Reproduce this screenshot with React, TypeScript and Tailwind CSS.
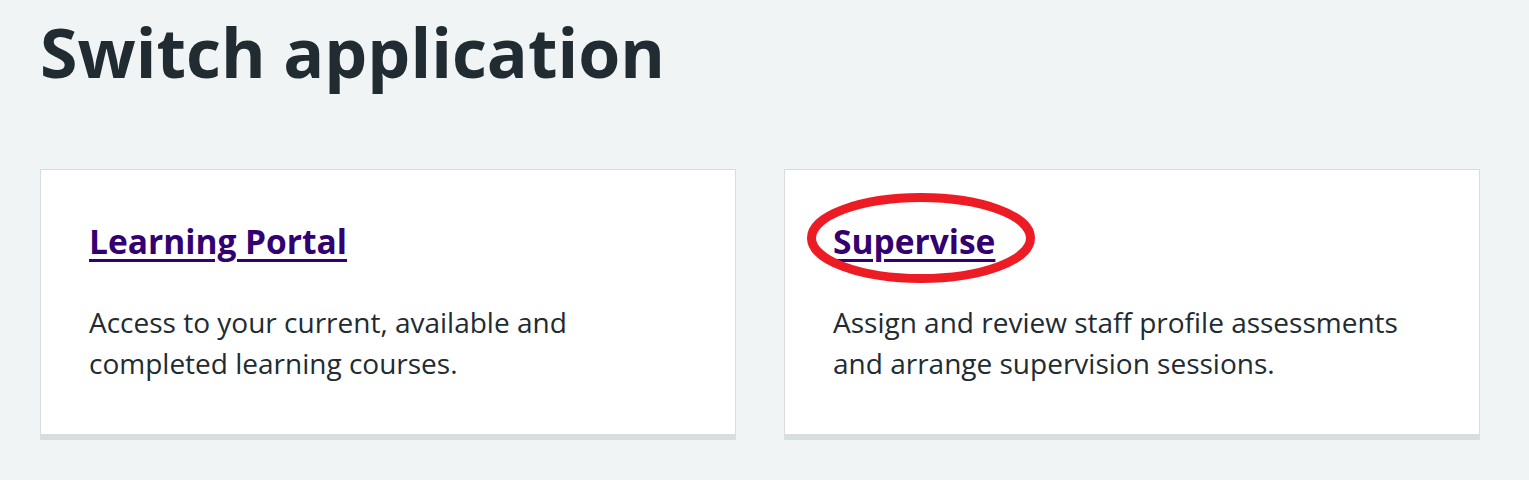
const apps = [
  {
    title: "Learning Portal",
    text: "Access to your current, available and completed learning courses.",
  },
  {
    title: "Supervise",
    text: "Assign and review staff profile assessments and arrange supervision sessions.",
    circled: true,
  },
];

export default function App() {
  return (
    <main className="min-h-[480px] bg-[#f0f4f5] px-10 pt-[4px] text-[#212b32] font-['Open_Sans',sans-serif]">
      <h1 className="text-[68px] font-bold leading-[1.4]">Switch application</h1>

      <div className="mt-[70px] grid w-[1440px] grid-cols-2 gap-12">
        {apps.map((app) => (
          <div
            key={app.title}
            className="h-[271px] border border-b-[6px] border-[#d8dde0] bg-white px-12 pt-[50px]"
          >
            <h2 className="text-[33.5px] font-bold leading-[1.3]">
              <a href="#" className="relative text-[#330072] underline decoration-[3px] underline-offset-[5px]">
                {app.title}
                {app.circled && (
                  <svg
                    className="pointer-events-none absolute left-[-27px] top-[-26px]"
                    width="230"
                    height="92"
                    viewBox="0 0 230 92"
                  >
                    <ellipse cx="115" cy="46" rx="109.5" ry="40.5" fill="none" stroke="#ed1c24" strokeWidth="9" />
                  </svg>
                )}
              </a>
            </h2>
            <p className="mt-[38px] text-[28px] leading-[41px]">{app.text}</p>
          </div>
        ))}
      </div>
    </main>
  );
}
